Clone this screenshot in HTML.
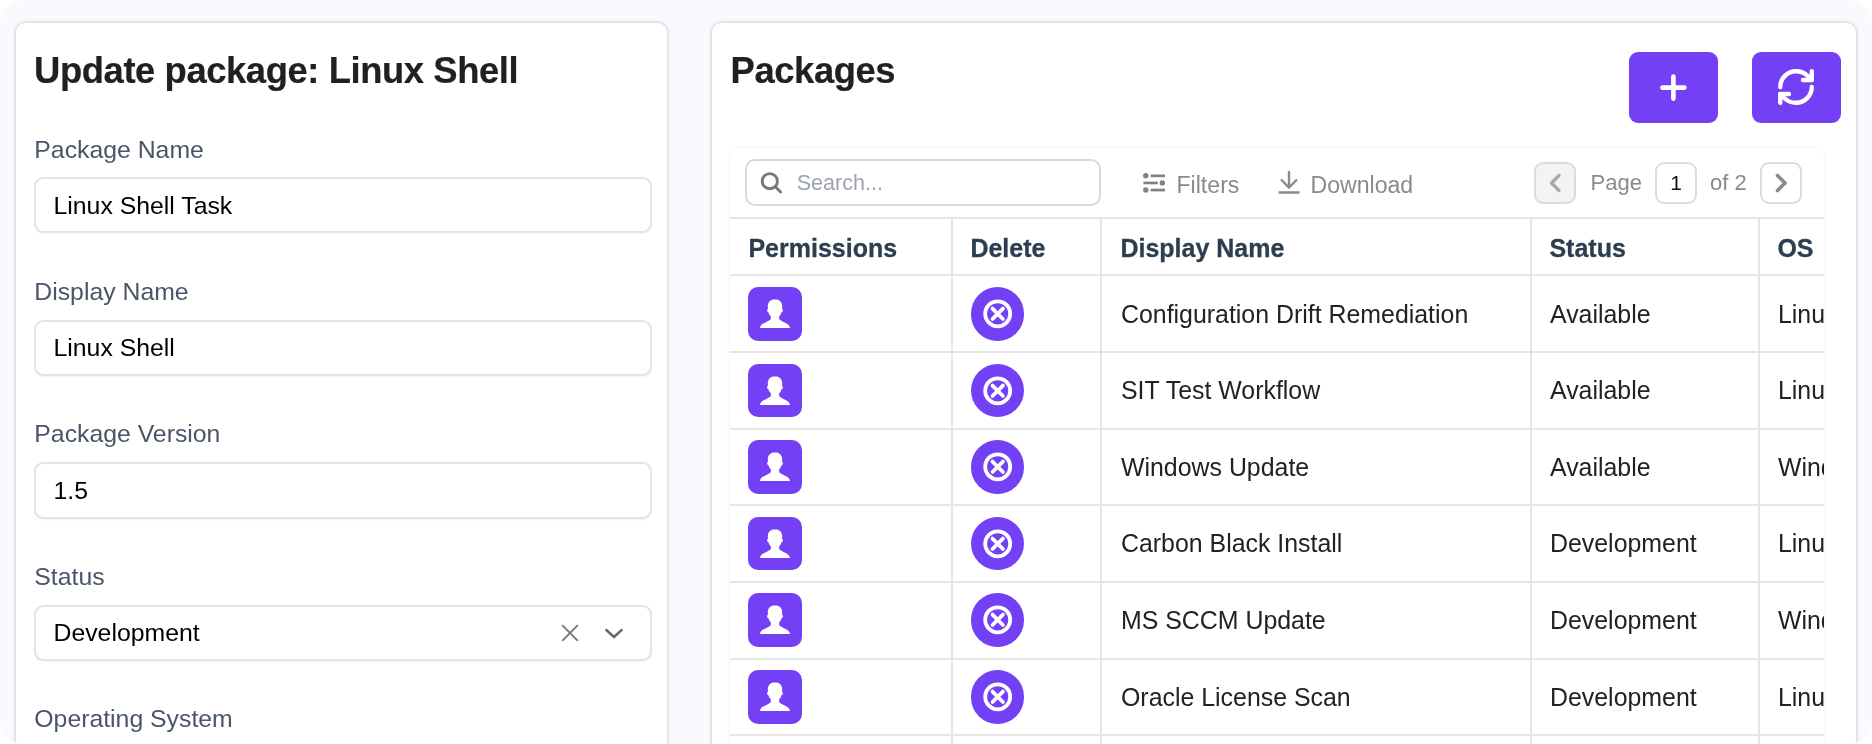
<!DOCTYPE html>
<html lang="en">
<head>
<meta charset="utf-8">
<title>Packages</title>
<style>
*{box-sizing:border-box;margin:0;padding:0}
html,body{width:1872px;height:744px;overflow:hidden;background:#fff}
body{font-family:"Liberation Sans",Arial,Helvetica,sans-serif;color:#000;position:relative}
.page{will-change:transform;position:absolute;left:0;top:0;width:1872px;height:744px;background:#f9fafd;border-radius:24px;overflow:hidden}
.card{position:absolute;background:#fff;border-radius:9px;box-shadow:0 0 4px rgba(0,0,0,.24),0 0 1px rgba(0,0,0,.08)}
#left{left:16px;top:23px;width:650.5px;height:800px}
#right{left:712px;top:23px;width:1144.3px;height:800px}
h1{position:absolute;font-size:36.4px;font-weight:bold;color:#211f20;line-height:40px;white-space:nowrap;letter-spacing:-0.42px;-webkit-text-stroke:.2px #211f20}
.lbl{position:absolute;left:18.3px;font-size:24.8px;line-height:28px;color:#4a5568;white-space:nowrap;letter-spacing:0}
.inp{position:absolute;left:18px;width:618px;height:56.6px;border:2px solid #e4e4e4;border-radius:9.5px;background:#fff;font-size:24.8px;line-height:53px;padding-left:17.5px;color:#000;white-space:nowrap;box-shadow:0 1px 2px rgba(0,0,0,.05);letter-spacing:0}
.btn{position:absolute;top:29px;width:88.6px;height:71px;border-radius:9px;background:#7340f5}
.btn svg{position:absolute;left:0;top:0}
#grid{position:absolute;left:18px;top:125px;width:1093.9px;height:700px;background:#fff;border-radius:9px 9px 0 0;box-shadow:0 0 4px rgba(0,0,0,.07);overflow:hidden}
#search{position:absolute;left:14.7px;top:11.2px;width:356px;height:47px;border:2px solid #d9d9d9;border-radius:10px;background:#fff}
#search span{position:absolute;left:50px;top:1px;font-size:21.6px;line-height:42px;color:#9ca3af;white-space:nowrap;letter-spacing:0}
.tool{position:absolute;font-size:23.1px;line-height:30px;color:#8a8a8a;white-space:nowrap;letter-spacing:0}
.pg{position:absolute;top:14px;width:42px;height:42px;border:2px solid #dcdcdc;border-radius:9px;background:#fff}
.pgt{position:absolute;font-size:22px;line-height:30px;color:#8a8a8a;white-space:nowrap;letter-spacing:0}
.hl{position:absolute;left:0;width:1095px;height:2px;background:#e5e5e5}
.vl{position:absolute;top:70px;width:2px;height:700px;background:#e5e5e5}
.th{position:absolute;top:85px;margin-left:-.6px;-webkit-text-stroke:.3px #2c3e50;font-size:25px;font-weight:bold;line-height:30px;color:#2c3e50;white-space:nowrap;letter-spacing:0}
.td{position:absolute;font-size:24.9px;line-height:30px;color:#222;white-space:nowrap;letter-spacing:0}
.perm{position:absolute;left:18px;width:53.6px;height:53.6px;border-radius:10px;background:#7340f5}
.del{position:absolute;left:240.8px;width:53.6px;height:53.6px;border-radius:50%;background:#7340f5}
</style>
</head>
<body>
<div class="page">

<div class="card" id="left">
  <h1 style="left:18.1px;top:28px">Update package: Linux Shell</h1>
  <div class="lbl" style="top:112.5px">Package Name</div>
  <div class="inp" style="top:153.9px">Linux Shell Task</div>
  <div class="lbl" style="top:255px">Display Name</div>
  <div class="inp" style="top:296.5px;line-height:51px">Linux Shell</div>
  <div class="lbl" style="top:397.4px">Package Version</div>
  <div class="inp" style="top:439.1px">1.5</div>
  <div class="lbl" style="top:540px">Status</div>
  <div class="inp" style="top:581.7px;line-height:51px">Development
    <svg style="position:absolute;left:521.9px;top:14.1px" width="24" height="24" viewBox="0 0 24 24" fill="none" stroke="#777" stroke-width="1.9" stroke-linecap="butt"><path d="M4.2 4.2 L19.8 19.8 M19.8 4.2 L4.2 19.8"/></svg>
    <svg style="position:absolute;left:566.3px;top:14.1px" width="24" height="24" viewBox="0 0 24 24" fill="none" stroke="#666" stroke-width="2.5" stroke-linecap="square" stroke-linejoin="miter"><path d="M4.6 9.2 L12 16 L19.4 9.2"/></svg>
  </div>
  <div class="lbl" style="top:682.4px">Operating System</div>
</div>

<div class="card" id="right">
  <h1 style="left:18.6px;top:28px">Packages</h1>
  <div class="btn" style="left:917px">
    <svg width="89" height="71" viewBox="0 0 89 71" fill="none" stroke="#fff" stroke-width="4.6" stroke-linecap="round"><path d="M33.4 35.6 H55.4 M44.4 24.6 V46.6"/></svg>
  </div>
  <div class="btn" style="left:1040px">
    <svg style="left:23.45px;top:14.45px" width="42" height="42" viewBox="0 0 24 24" fill="none" stroke="#fff" stroke-width="2.5" stroke-linecap="round" stroke-linejoin="round"><path d="M3 12a9 9 0 0 1 9-9 9.75 9.75 0 0 1 6.74 2.74L21 8"/><path d="M21 3v5h-5"/><path d="M21 12a9 9 0 0 1-9 9 9.75 9.75 0 0 1-6.74-2.74L3 16"/><path d="M8 16H3v5"/></svg>
  </div>

  <div id="grid">
    <div id="search">
      <svg style="position:absolute;left:10px;top:8px" width="28" height="28" viewBox="0 0 28 28" fill="none" stroke="#787878" stroke-width="2.9" stroke-linecap="round"><circle cx="12.8" cy="12.2" r="7.6"/><path d="M18.4 17.8 L23.6 23"/></svg>
      <span>Search...</span>
    </div>
    <svg style="position:absolute;left:413px;top:25px" width="24" height="22" viewBox="0 0 24 22" fill="#828282"><circle cx="2.8" cy="2.8" r="2.7"/><rect x="7.6" y="1.5" width="14.4" height="2.7"/><rect x="0.4" y="8.6" width="14.4" height="2.7"/><circle cx="19.3" cy="9.9" r="2.7"/><circle cx="2.8" cy="17" r="2.7"/><rect x="7.6" y="15.7" width="14.4" height="2.7"/></svg>
    <div class="tool" style="left:446.5px;top:22px">Filters</div>
    <svg style="position:absolute;left:547px;top:22px" width="24" height="25" viewBox="0 0 24 25" fill="none" stroke="#8b8b8b" stroke-width="2.4" stroke-linecap="butt" stroke-linejoin="miter"><path d="M12 1 V17 M4 9.5 L12 17.5 L20 9.5 M1.5 22.5 H22.5"/></svg>
    <div class="tool" style="left:580.5px;top:22px">Download</div>

    <div class="pg" style="left:804px;background:#f3f3f3">
      <svg width="38" height="38" viewBox="0 0 38 38" fill="none" stroke="#a9a9a9" stroke-width="3.4" stroke-linecap="round" stroke-linejoin="round" style="position:absolute;left:0;top:0"><path d="M23 11.5 L15.5 19 L23 26.5"/></svg>
    </div>
    <div class="pgt" style="left:860.5px;top:20px">Page</div>
    <div class="pg" style="left:925px"><div style="position:absolute;left:0;top:0;width:38px;text-align:center;font-size:21px;line-height:37px;color:#111">1</div></div>
    <div class="pgt" style="left:980px;top:20px">of 2</div>
    <div class="pg" style="left:1030px">
      <svg width="38" height="38" viewBox="0 0 38 38" fill="none" stroke="#8a8a8a" stroke-width="3.6" stroke-linecap="round" stroke-linejoin="round" style="position:absolute;left:0;top:0"><path d="M15.5 11.5 L23 19 L15.5 26.5"/></svg>
    </div>

    <div class="hl" style="top:69px;margin-top:.4px"></div>
    <div class="hl" style="top:126px"></div>
    <div class="vl" style="left:221px"></div>
    <div class="vl" style="left:370px"></div>
    <div class="vl" style="left:800px"></div>
    <div class="vl" style="left:1028px"></div>
    <div class="th" style="left:19px">Permissions</div>
    <div class="th" style="left:241px">Delete</div>
    <div class="th" style="left:391px">Display Name</div>
    <div class="th" style="left:820px">Status</div>
    <div class="th" style="left:1048px">OS</div>
    <div id="rows">
    <div class="perm" style="top:139.0px"><svg width="54" height="54" viewBox="0 0 54 54" fill="#fff"><path d="M27 12.2c-4.400 0-7.200 3.100-7.200 7.100 0 1.300.300 2.400.300 2.400s-1.300.500-1 1.900c.300 1.500 1.400 1.700 1.400 1.700s.500 2.400 2.300 3.900v2.500c0 1.300-3.600 2.800-6.500 4.200-3.100 1.500-4 3-4.300 5.100h30c-.300-2.100-1.200-3.600-4.300-5.100-2.900-1.400-6.500-2.900-6.500-4.200v-2.500c1.800-1.500 2.300-3.900 2.300-3.900s1.100-.200 1.400-1.700c.300-1.400-1-1.900-1-1.900s.300-1.100.300-2.400c0-4-2.800-7.100-7.200-7.100z"/></svg></div>
    <div class="del" style="top:139.0px"><svg width="54" height="54" viewBox="0 0 54 54" fill="none" stroke="#fff" stroke-width="3.8" stroke-linecap="round"><circle cx="26.7" cy="26.8" r="12.5"/><path d="M21.500 21.600 L31.900 32 M31.900 21.600 L21.500 32"/></svg></div>
    <div class="td" style="left:391px;top:151.1px">Configuration Drift Remediation</div>
    <div class="td" style="left:820px;top:151.1px">Available</div>
    <div class="td" style="left:1048px;top:151.1px">Linux</div>
    <div class="hl" style="top:203px"></div>
    <div class="perm" style="top:215.6px"><svg width="54" height="54" viewBox="0 0 54 54" fill="#fff"><path d="M27 12.2c-4.400 0-7.200 3.100-7.200 7.100 0 1.300.300 2.400.300 2.400s-1.300.500-1 1.900c.300 1.500 1.400 1.700 1.400 1.700s.500 2.400 2.300 3.900v2.500c0 1.300-3.600 2.800-6.500 4.200-3.100 1.500-4 3-4.300 5.100h30c-.300-2.100-1.200-3.600-4.300-5.100-2.900-1.400-6.500-2.900-6.500-4.200v-2.500c1.800-1.500 2.300-3.900 2.300-3.900s1.100-.200 1.400-1.700c.300-1.400-1-1.900-1-1.900s.300-1.100.300-2.400c0-4-2.800-7.100-7.200-7.100z"/></svg></div>
    <div class="del" style="top:215.6px"><svg width="54" height="54" viewBox="0 0 54 54" fill="none" stroke="#fff" stroke-width="3.8" stroke-linecap="round"><circle cx="26.7" cy="26.8" r="12.5"/><path d="M21.500 21.600 L31.900 32 M31.900 21.600 L21.500 32"/></svg></div>
    <div class="td" style="left:391px;top:226.7px">SIT Test Workflow</div>
    <div class="td" style="left:820px;top:226.7px">Available</div>
    <div class="td" style="left:1048px;top:226.7px">Linux</div>
    <div class="hl" style="top:280px"></div>
    <div class="perm" style="top:292.2px"><svg width="54" height="54" viewBox="0 0 54 54" fill="#fff"><path d="M27 12.2c-4.400 0-7.200 3.100-7.200 7.100 0 1.300.300 2.400.300 2.400s-1.300.500-1 1.900c.300 1.500 1.400 1.700 1.400 1.700s.500 2.400 2.300 3.900v2.500c0 1.300-3.600 2.800-6.500 4.200-3.100 1.500-4 3-4.300 5.100h30c-.300-2.100-1.200-3.600-4.300-5.100-2.900-1.400-6.500-2.900-6.500-4.200v-2.500c1.800-1.500 2.300-3.900 2.300-3.900s1.100-.200 1.400-1.700c.300-1.400-1-1.900-1-1.900s.300-1.100.300-2.400c0-4-2.800-7.100-7.200-7.100z"/></svg></div>
    <div class="del" style="top:292.2px"><svg width="54" height="54" viewBox="0 0 54 54" fill="none" stroke="#fff" stroke-width="3.8" stroke-linecap="round"><circle cx="26.7" cy="26.8" r="12.5"/><path d="M21.500 21.600 L31.900 32 M31.900 21.600 L21.500 32"/></svg></div>
    <div class="td" style="left:391px;top:304.3px">Windows Update</div>
    <div class="td" style="left:820px;top:304.3px">Available</div>
    <div class="td" style="left:1048px;top:304.3px">Windows</div>
    <div class="hl" style="top:356px"></div>
    <div class="perm" style="top:368.8px"><svg width="54" height="54" viewBox="0 0 54 54" fill="#fff"><path d="M27 12.2c-4.400 0-7.200 3.100-7.200 7.100 0 1.300.300 2.400.300 2.400s-1.300.500-1 1.900c.300 1.500 1.400 1.700 1.400 1.700s.500 2.400 2.300 3.900v2.500c0 1.300-3.600 2.800-6.500 4.200-3.100 1.500-4 3-4.300 5.100h30c-.300-2.100-1.200-3.600-4.300-5.100-2.900-1.400-6.500-2.900-6.500-4.200v-2.500c1.800-1.500 2.300-3.900 2.300-3.900s1.100-.200 1.400-1.700c.300-1.400-1-1.900-1-1.900s.300-1.100.300-2.400c0-4-2.800-7.100-7.200-7.100z"/></svg></div>
    <div class="del" style="top:368.8px"><svg width="54" height="54" viewBox="0 0 54 54" fill="none" stroke="#fff" stroke-width="3.8" stroke-linecap="round"><circle cx="26.7" cy="26.8" r="12.5"/><path d="M21.500 21.600 L31.900 32 M31.900 21.600 L21.500 32"/></svg></div>
    <div class="td" style="left:391px;top:379.9px">Carbon Black Install</div>
    <div class="td" style="left:820px;top:379.9px">Development</div>
    <div class="td" style="left:1048px;top:379.9px">Linux</div>
    <div class="hl" style="top:433px"></div>
    <div class="perm" style="top:445.4px"><svg width="54" height="54" viewBox="0 0 54 54" fill="#fff"><path d="M27 12.2c-4.400 0-7.200 3.100-7.200 7.100 0 1.300.300 2.400.300 2.400s-1.300.500-1 1.900c.300 1.500 1.400 1.700 1.400 1.700s.500 2.400 2.300 3.900v2.500c0 1.300-3.600 2.800-6.500 4.200-3.100 1.500-4 3-4.300 5.100h30c-.300-2.100-1.200-3.600-4.300-5.100-2.900-1.400-6.500-2.900-6.500-4.200v-2.500c1.800-1.500 2.300-3.900 2.300-3.900s1.100-.200 1.400-1.700c.300-1.400-1-1.900-1-1.900s.300-1.100.300-2.400c0-4-2.800-7.100-7.200-7.100z"/></svg></div>
    <div class="del" style="top:445.4px"><svg width="54" height="54" viewBox="0 0 54 54" fill="none" stroke="#fff" stroke-width="3.8" stroke-linecap="round"><circle cx="26.7" cy="26.8" r="12.5"/><path d="M21.500 21.600 L31.900 32 M31.900 21.600 L21.500 32"/></svg></div>
    <div class="td" style="left:391px;top:456.5px">MS SCCM Update</div>
    <div class="td" style="left:820px;top:456.5px">Development</div>
    <div class="td" style="left:1048px;top:456.5px">Windows</div>
    <div class="hl" style="top:510px"></div>
    <div class="perm" style="top:522.0px"><svg width="54" height="54" viewBox="0 0 54 54" fill="#fff"><path d="M27 12.2c-4.400 0-7.200 3.100-7.200 7.100 0 1.300.300 2.400.300 2.400s-1.300.500-1 1.900c.300 1.500 1.400 1.700 1.400 1.700s.500 2.400 2.300 3.900v2.500c0 1.300-3.600 2.800-6.500 4.200-3.100 1.500-4 3-4.300 5.100h30c-.300-2.100-1.200-3.600-4.300-5.100-2.900-1.400-6.500-2.900-6.500-4.200v-2.500c1.800-1.500 2.300-3.900 2.300-3.900s1.100-.200 1.400-1.700c.300-1.400-1-1.900-1-1.900s.300-1.100.300-2.400c0-4-2.800-7.100-7.200-7.100z"/></svg></div>
    <div class="del" style="top:522.0px"><svg width="54" height="54" viewBox="0 0 54 54" fill="none" stroke="#fff" stroke-width="3.8" stroke-linecap="round"><circle cx="26.7" cy="26.8" r="12.5"/><path d="M21.500 21.600 L31.900 32 M31.900 21.600 L21.500 32"/></svg></div>
    <div class="td" style="left:391px;top:534.1px">Oracle License Scan</div>
    <div class="td" style="left:820px;top:534.1px">Development</div>
    <div class="td" style="left:1048px;top:534.1px">Linux</div>
    <div class="hl" style="top:586px"></div>
    <div class="perm" style="top:598.6px"><svg width="54" height="54" viewBox="0 0 54 54" fill="#fff"><path d="M27 12.2c-4.400 0-7.200 3.100-7.200 7.100 0 1.300.300 2.400.300 2.400s-1.300.500-1 1.900c.300 1.500 1.400 1.700 1.400 1.700s.500 2.400 2.300 3.900v2.500c0 1.300-3.600 2.800-6.500 4.200-3.100 1.500-4 3-4.300 5.100h30c-.300-2.100-1.200-3.600-4.300-5.100-2.900-1.400-6.500-2.900-6.500-4.200v-2.500c1.800-1.500 2.300-3.900 2.300-3.900s1.100-.200 1.400-1.700c.300-1.400-1-1.900-1-1.900s.300-1.100.300-2.400c0-4-2.800-7.100-7.200-7.100z"/></svg></div>
    <div class="del" style="top:598.6px"><svg width="54" height="54" viewBox="0 0 54 54" fill="none" stroke="#fff" stroke-width="3.8" stroke-linecap="round"><circle cx="26.7" cy="26.8" r="12.5"/><path d="M21.500 21.600 L31.900 32 M31.900 21.600 L21.500 32"/></svg></div>
    <div class="td" style="left:391px;top:610.7px">Patch Compliance Check</div>
    <div class="td" style="left:820px;top:610.7px">Development</div>
    <div class="td" style="left:1048px;top:610.7px">Linux</div>
    <div class="hl" style="top:663px"></div>
    </div><!--rows-->
  </div>
</div>

</div>
</body>
</html>
